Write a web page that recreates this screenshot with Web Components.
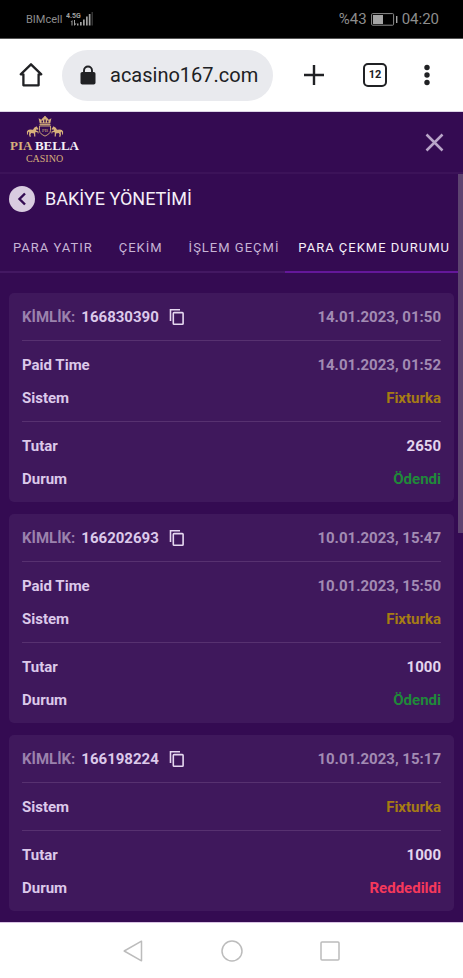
<!DOCTYPE html>
<html lang="tr">
<head>
<meta charset="utf-8">
<meta name="viewport" content="width=device-width, initial-scale=1">
<title>Bakiye Yönetimi</title>
<style>
  html, body { margin: 0; height: 100%; }
  body { font-family: Roboto, "Noto Sans", sans-serif; background: #340b52; }
</style>
</head>
<body>
<phone-screen></phone-screen>
<script>
const define = (name, html, setup) => {
  const template = document.createElement('template');
  template.innerHTML = '<style>*{box-sizing:border-box}button{font:inherit;color:inherit;background:none;border:0;padding:0;margin:0;cursor:pointer}svg{display:block}</style>' + html;
  customElements.define(name, class extends HTMLElement {
    constructor() {
      super();
      this.attachShadow({ mode: 'open' }).append(template.content.cloneNode(true));
    }
    connectedCallback() { if (setup) setup(this, this.shadowRoot); }
  });
};

define('status-bar', `
<style>
  :host { display: flex; justify-content: space-between; align-items: center; height: 39px; padding: 0 24px 0 26px; background: #000; color: #8d8d8d; border-bottom: 1px solid #555; box-sizing: border-box; }
  .group { display: flex; align-items: center; gap: 4px; }
  .carrier { font-size: 11px; }
  .num { font-size: 15px; }
</style>
<div class="group">
  <span class="carrier">BIMcell</span>
  <svg width="28" height="16" viewBox="0 0 28 16" fill="#a0a0a0" role="img" aria-label="Sinyal">
    <text x="0" y="7" font-size="7" font-weight="700" font-family="Roboto, sans-serif">4.5G</text>
    <path d="M4.500 11l2-2v5.500H5.500v-3.800zM8 9h1v3.500h1.500l-2 2.200-.5-.500zM11 12.500h1.500v2H11zM14 11h1.700v3.500H14zM17 8.500h1.700v6H17zM20 5.500h1.700v9H20zM22.800 3h1.700v11.500h-1.700z"/><path opacity=".4" d="M25.600 1h1.200v13.500h-1.200z"/>
  </svg>
</div>
<div class="group">
  <span class="num">%43</span>
  <svg width="27" height="13" viewBox="0 0 27 13" role="img" aria-label="Pil"><rect x=".6" y=".6" width="22" height="11.6" rx="1" fill="none" stroke="#8d8d8d"/><path fill="#a5a5a5" d="M2 2h10v9H2zM25 3h1.4v7H25z"/></svg>
  <span class="num">04:20</span>
</div>`);

define('browser-bar', `
<style>
  :host { display: flex; align-items: center; height: 73px; padding: 0 31px 0 19px; background: #fff; color: #202124; border-bottom: 1px solid #dcd4e6; box-sizing: border-box; }
  .address { flex: 1; display: flex; align-items: center; gap: 14px; height: 51px; min-width: 0; margin-left: 19px; padding: 0 8px 0 18px; border-radius: 26px; background: #e9eaee; }
  .address svg { flex: none; }
  input { flex: 1; min-width: 0; width: 0; border: 0; padding: 0; background: none; font: 20px Roboto, sans-serif; color: inherit; outline: 0; }
  .tools { display: flex; align-items: center; margin-left: 31px; }
  .count { width: 24px; height: 24px; margin: 0 35px 0 39px; border: 2px solid #202124; border-radius: 5px; font-size: 11px; font-weight: 700; line-height: 20px; text-align: center; }
  .home { flex: none; }
</style>
<button class="home" aria-label="Ana sayfa"><svg width="24" height="26" viewBox="0 0 24 26" fill="none" stroke="#202124" stroke-width="2.3" stroke-linejoin="round"><path d="M4.400 12.300H1.700L12 2.300l10.300 10H19.600V23.300H4.400z"/></svg></button>
<div class="address">
  <svg width="16" height="20" viewBox="0 0 16 20"><path d="M4 9V5.500a4 4 0 018 0V9" fill="none" stroke="#202124" stroke-width="1.900"/><rect x=".500" y="7" width="15" height="12.500" rx="1.800" fill="#202124"/></svg>
  <input aria-label="Adres" value="acasino167.com">
</div>
<div class="tools">
  <button aria-label="Yeni sekme"><svg width="20" height="20" viewBox="0 0 20 20"><path d="M10 0v20M0 10h20" stroke="#202124" stroke-width="2.400"/></svg></button>
  <button class="count">12</button>
  <button aria-label="Menü"><svg width="10" height="22" viewBox="0 0 10 22" fill="#202124"><circle cx="5" cy="3.500" r="2.700"/><circle cx="5" cy="11" r="2.700"/><circle cx="5" cy="18.500" r="2.700"/></svg></button>
</div>`);

define('site-header', `
<style>
  :host { display: flex; justify-content: space-between; align-items: center; height: 62px; padding: 0 19px 0 10px; border-bottom: 2px solid #3c1359; box-sizing: border-box; }
  a { display: grid; justify-items: center; margin-bottom: 4px; text-decoration: none; color: #d7b07b; font-family: "Liberation Serif", serif; }
  .name { font-size: 13px; line-height: 15px; font-weight: 700; white-space: nowrap; }
  .name b { color: #f6eff7; }
  .sub { font-size: 10px; line-height: 12px; }
</style>
<a href="#" aria-label="Pia Bella Casino">
  <svg width="38" height="22" viewBox="0 0 38 22" fill="#d7b07b">
    <path d="M12.600 2.200l2.700 1.500 1.800-2.300 1.900-.800 1.900.800 1.800 2.300 2.700-1.500-1.200 5.300H13.800z"/><circle cx="19" cy="1.100" r="1"/><path d="M15.500 4.500h1.500v2h-1.500zM18.300 3.500h1.400v3h-1.400zM21 4.500h1.500v2H21z" fill="#340b52"/><path d="M13.500 8.100h11v1.100h-11z"/>
    <path d="M13.500 10h11v4.500c0 2.800-2.600 4.200-5.500 5.600-2.900-1.400-5.500-2.800-5.500-5.600z" fill="none" stroke="#d7b07b" stroke-width=".900"/>
    <text x="19" y="16" font-size="5" font-family="Liberation Serif, serif" text-anchor="middle">PB</text>
    <path id="h" d="M9.800 10.800l.7-.6.500.8 1.500 1.900-.6.800-1.400-.4-.3 1.400 2.200.8.100 2-.7.100-.3-1.400-2-.2-.3 1.300.2 3.200H8.200l-.2-3.100-2.600-.4-1 1.300.5 2.400H3.600L3 18.300l.3-1.700-.9-1-.6 2.700-.8.700-.1-3.400 1.200-1.700 1.900-.3 3 .2 1.200-2z"/>
    <use href="#h" transform="matrix(-1 0 0 1 38 0)"/>
  </svg>
  <span class="name">PIA <b>BELLA</b></span>
  <span class="sub">CASINO</span>
</a>
<button aria-label="Kapat"><svg width="19" height="19" viewBox="0 0 19 19"><path d="M1.500 1.500l16 16M17.500 1.500l-16 16" stroke="#b9a5c9" stroke-width="2.500"/></svg></button>`);

define('page-title', `
<style>
  :host { display: flex; align-items: center; gap: 10px; height: 49px; padding: 0 9px; }
  button { width: 26px; height: 26px; border-radius: 50%; background: #d9cce0; display: grid; place-items: center; }
  h1 { margin: 0; font-size: 18px; font-weight: 400; color: #f5eff8; }
</style>
<button aria-label="Geri"><svg width="10" height="14" viewBox="0 0 10 14" fill="none" stroke="#340b52" stroke-width="2.400"><path d="M8 1.500L2.500 7 8 12.500"/></svg></button>
<h1><slot></slot></h1>`);

define('tab-bar', `
<style>
  :host { display: flex; height: 50px; }
</style><slot></slot>`);

define('tab-item', `
<style>
  :host { display: block; flex: none; border-bottom: 2px solid #431862; color: #c7b4d5; }
  :host([grow]) { flex: 1 1 0; min-width: 0; overflow: hidden; }
  :host([grow]) button { padding-right: 0; }
  :host([active]) { border-color: #64179a; color: #f5eff8; }
  button { height: 100%; padding: 0 13px; font-size: 13px; letter-spacing: 1px; white-space: nowrap; }
</style><button><slot></slot></button>`);

define('copy-button', `
<style>:host { display: block; } button { display: block; }</style>
<button aria-label="Kopyala"><svg width="16" height="18" viewBox="0 0 16 18" fill="none" stroke="#e6d8f0" stroke-width="1.600"><path d="M1.500 13V1.800H11"/><rect x="4.300" y="4.600" width="9.800" height="11.600" rx=".8"/></svg></button>`);

define('detail-row', `
<style>
  :host { display: flex; justify-content: space-between; align-items: center; height: 33px; }
  .label { display: flex; align-items: center; gap: 6px; }
  .value { color: #a28bb3; }
  :host([tone="system"]) .value { color: #a67c14; }
  :host([tone="amount"]) .value { color: #e3d5ed; }
  :host([tone="paid"]) .value { color: #20893a; }
  :host([tone="rejected"]) .value { color: #f5385b; }
</style>
<span class="label"><slot></slot></span><span class="value"><slot name="value"></slot></span>`);

define('payout-card', `
<style>
  :host { display: block; padding: 0 13px; border-radius: 5px; background: #3f185c; color: #dcc9ea; font-size: 15px; font-weight: 700; }
  section { padding: 7px 0; }
  section + section { border-top: 1px solid #573170; }
  .key { color: #9b82ad; }
  .id { margin-right: 4px; }
</style>
<section><detail-row><span class="key">KİMLİK:</span><span class="id"></span><copy-button></copy-button><span slot="value" class="date"></span></detail-row></section>
<section><detail-row class="paid-row">Paid Time<span slot="value" class="paid"></span></detail-row><detail-row tone="system">Sistem<span slot="value">Fixturka</span></detail-row></section>
<section><detail-row tone="amount">Tutar<span slot="value" class="amount"></span></detail-row><detail-row class="state-row">Durum<span slot="value" class="state"></span></detail-row></section>`,
(host, root) => {
  const put = (cls, attr) => { root.querySelector(cls).textContent = host.getAttribute(attr); };
  put('.id', 'number'); put('.date', 'date'); put('.amount', 'amount'); put('.state', 'state');
  if (host.hasAttribute('paid')) put('.paid', 'paid'); else root.querySelector('.paid-row')?.remove();
  root.querySelector('.state-row').setAttribute('tone', host.hasAttribute('paid') ? 'paid' : 'rejected');
});

define('scroll-area', `
<style>
  :host { display: block; position: relative; flex: 1; }
  .thumb { position: absolute; top: 0; right: 0; width: 5px; height: 48%; background: #5d4370; }
</style><slot></slot><div class="thumb"></div>`);

define('system-nav', `
<style>
  :host { display: flex; justify-content: center; align-items: center; gap: 76px; height: 56px; background: #fff; border-top: 1px solid #d9c3e4; box-sizing: border-box; }
</style>
<button aria-label="Geri"><svg width="22" height="22" viewBox="0 0 22 22" fill="none" stroke="#bcbcbc" stroke-width="1.500" stroke-linejoin="round"><path d="M18.500 1.200v19.600L1.200 11z"/></svg></button>
<button aria-label="Ana ekran"><svg width="22" height="22" viewBox="0 0 22 22" fill="none" stroke="#bcbcbc" stroke-width="1.500"><circle cx="11" cy="11" r="10"/></svg></button>
<button aria-label="Son uygulamalar"><svg width="22" height="22" viewBox="0 0 22 22" fill="none" stroke="#bcbcbc" stroke-width="1.500"><rect x="2" y="2" width="18" height="18" rx="1"/></svg></button>`);

define('phone-screen', `
<style>
  :host { display: flex; flex-direction: column; min-height: 100%; background: #340b52; }
  .cards { display: grid; gap: 12px; padding: 20px 9px 11px; }
</style>
<status-bar></status-bar>
<browser-bar></browser-bar>
<site-header></site-header>
<scroll-area>
  <page-title>BAKİYE YÖNETİMİ</page-title>
  <tab-bar>
    <tab-item>PARA YATIR</tab-item>
    <tab-item>ÇEKİM</tab-item>
    <tab-item grow>İŞLEM GEÇMİ</tab-item>
    <tab-item active>PARA ÇEKME DURUMU</tab-item>
  </tab-bar>
  <div class="cards">
    <payout-card number="166830390" date="14.01.2023, 01:50" paid="14.01.2023, 01:52" amount="2650" state="Ödendi"></payout-card>
    <payout-card number="166202693" date="10.01.2023, 15:47" paid="10.01.2023, 15:50" amount="1000" state="Ödendi"></payout-card>
    <payout-card number="166198224" date="10.01.2023, 15:17" amount="1000" state="Reddedildi"></payout-card>
  </div>
</scroll-area>
<system-nav></system-nav>`);
</script>
</body>
</html>
